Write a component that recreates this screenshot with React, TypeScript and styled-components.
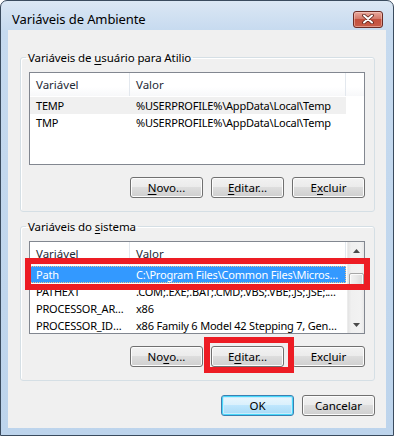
import React from "react";
import styled, { createGlobalStyle, css } from "styled-components";

const GlobalStyle = createGlobalStyle`
  html, body {
    margin: 0;
    padding: 0;
    background: #ffffff;
  }
  body {
    font-family: "Noto Sans", "Segoe UI", sans-serif;
    font-size: 11.5px;
    color: #000;
  }
  * {
    box-sizing: border-box;
  }
`;

const Window = styled.div`
  width: 394px;
  height: 436px;
  border: 1px solid #3a4b5e;
  border-radius: 7px 7px 0 0;
  background: linear-gradient(180deg, #dbe7f4 0px, #c6daef 30px, #bdd4ec 100%);
  display: flex;
  flex-direction: column;
  overflow: hidden;
`;

const TitleBar = styled.div`
  height: 29px;
  flex: none;
  display: flex;
  align-items: center;
  justify-content: space-between;
  padding: 7px 10px 0 11px;
`;

const Title = styled.span`
  font-size: 13px;
  color: #000;
  letter-spacing: -0.1px;
`;

const CloseButton = styled.div`
  width: 30px;
  height: 17px;
  border: 1px solid #6b2b24;
  border-radius: 3px;
  background: linear-gradient(180deg, #e9a99d 0%, #d47a6a 45%, #c4503d 50%, #c85c48 100%);
  box-shadow: inset 0 0 0 1px rgba(255, 220, 210, 0.45);
  display: flex;
  align-items: center;
  justify-content: center;
`;

const Client = styled.div`
  flex: 1;
  margin: 0 7px 7px 7px;
  background: #f0f0f0;
  padding: 20px 11px 12px 12px;
  display: flex;
  flex-direction: column;
`;

const GroupBox = styled.fieldset<{ $spaced?: boolean }>`
  margin: ${(p) => (p.$spaced ? "7px 0 0 0" : "0")};
  padding: 0;
  height: 162px;
  border: 1px solid #d5dfe5;
  border-radius: 3px;
  box-shadow: inset 1px 1px 0 #ffffff;
  min-width: 0;
`;

const Legend = styled.legend`
  margin-left: 5px;
  padding: 0 2px;
  line-height: 15px;
  height: 15px;
  color: #000;
  letter-spacing: -0.1px;
`;

const GroupInner = styled.div`
  padding: 7px 9px 13px 8px;
  display: flex;
  flex-direction: column;
  gap: 12px;
`;

const Mn = styled.span`
  text-decoration: underline;
  text-underline-offset: 2px;
`;

const ListView = styled.div`
  position: relative;
  height: 93px;
  border: 1px solid #828790;
  background: #ffffff;
  display: flex;
`;

const ListBody = styled.div`
  flex: 1;
  display: flex;
  flex-direction: column;
  overflow: hidden;
`;

const HeaderRow = styled.div`
  height: 24px;
  flex: none;
  display: grid;
  grid-template-columns: 100px 216px 1fr;
  background: linear-gradient(180deg, #ffffff 0%, #ffffff 60%, #f7f8fa 100%);
  border-bottom: 1px solid #ffffff;
`;

const HeaderCell = styled.div<{ $last?: boolean }>`
  display: flex;
  align-items: center;
  padding-left: 6px;
  border-right: ${(p) => (p.$last ? "none" : "1px solid #e3e8ee")};
  color: #1e2a36;
  white-space: nowrap;
  overflow: hidden;
`;

const Row = styled.div<{ $state?: "selected" | "inactive" }>`
  width: 316px;
  height: 17px;
  flex: none;
  display: grid;
  grid-template-columns: 100px 216px;
  align-items: center;
  ${(p) =>
    p.$state === "selected" &&
    css`
      background: #3399ff;
      color: #ffffff;
      outline: 1px dotted #f5c28a;
      outline-offset: -1px;
    `}
  ${(p) =>
    p.$state === "inactive" &&
    css`
      background: #f0f0f0;
    `}
`;

const Cell = styled.div`
  padding: 0 6px 0 6px;
  font-size: 11px;
  letter-spacing: -0.2px;
  white-space: nowrap;
  overflow: hidden;
  text-overflow: ellipsis;
  line-height: 17px;
`;

const Scrollbar = styled.div`
  width: 17px;
  flex: none;
  display: flex;
  flex-direction: column;
  background: linear-gradient(90deg, #e3e3e3 0%, #f0f0f0 20%, #f2f2f2 80%, #e8e8e8 100%);
  border-left: 1px solid #ececec;
`;

const ArrowButton = styled.div`
  height: 17px;
  flex: none;
  display: flex;
  align-items: center;
  justify-content: center;
`;

const Track = styled.div`
  flex: 1;
  display: flex;
  flex-direction: column;
  align-items: center;
`;

const Thumb = styled.div`
  margin-top: 14px;
  width: 15px;
  height: 14px;
  border: 1px solid #a6a6a6;
  border-radius: 2px;
  background: linear-gradient(90deg, #f3f3f3 0%, #e8e8e8 50%, #d9d9d9 100%);
  box-shadow: inset 0 0 0 1px #fbfbfb;
`;

const Highlight = styled.div<{ $top: number; $left: number; $w: number; $h: number }>`
  position: absolute;
  top: ${(p) => p.$top}px;
  left: ${(p) => p.$left}px;
  width: ${(p) => p.$w}px;
  height: ${(p) => p.$h}px;
  border: 6px solid #ed1c24;
  pointer-events: none;
  z-index: 2;
`;

const ButtonRow = styled.div<{ $outer?: boolean }>`
  display: flex;
  justify-content: flex-end;
  gap: 8px;
  margin-top: ${(p) => (p.$outer ? "14px" : "0")};
`;

const Button = styled.div<{ $default?: boolean }>`
  position: relative;
  width: 73px;
  height: 21px;
  display: flex;
  align-items: center;
  justify-content: center;
  border: 1px solid #707070;
  border-radius: 3px;
  background: linear-gradient(180deg, #f2f2f2 0%, #ebebeb 49%, #dddddd 50%, #cfcfcf 100%);
  box-shadow: inset 0 0 0 1px #fcfcfc;
  color: #000;
  ${(p) =>
    p.$default &&
    css`
      border-color: #3c7fb1;
      background: linear-gradient(180deg, #eaf6fd 0%, #d9f0fc 49%, #bee6fd 50%, #a7d9f5 100%);
      box-shadow: inset 0 0 0 1px #48d8fb, inset 0 0 0 2px #c9ecfc;
    `}
`;

type Entry = { name: string; value: string; state?: "selected" | "inactive" };

const userVars: Entry[] = [
  { name: "TEMP", value: "%USERPROFILE%\\AppData\\Local\\Temp", state: "inactive" },
  { name: "TMP", value: "%USERPROFILE%\\AppData\\Local\\Temp" },
];

const systemVars: Entry[] = [
  {
    name: "Path",
    value: "C:\\Program Files\\Common Files\\Microsoft Shared\\Windows Live;%SystemRoot%",
    state: "selected",
  },
  { name: "PATHEXT", value: ".COM;.EXE;.BAT;.CMD;.VBS;.VBE;.JS;.JSE;.WSF;.WSH;.MSC" },
  { name: "PROCESSOR_ARCHITECTURE", value: "x86" },
  { name: "PROCESSOR_IDENTIFIER", value: "x86 Family 6 Model 42 Stepping 7, GenuineIntel" },
];

const CloseGlyph = () => (
  <svg width="12" height="10" viewBox="0 0 12 10">
    <path d="M2 1.5 L10 8.5 M10 1.5 L2 8.5" stroke="#5a2018" strokeWidth="3.6" strokeLinecap="round" />
    <path d="M2 1.5 L10 8.5 M10 1.5 L2 8.5" stroke="#ffffff" strokeWidth="2" strokeLinecap="round" />
  </svg>
);

const Arrow = ({ up }: { up?: boolean }) => (
  <svg width="7" height="4" viewBox="0 0 7 4">
    <path d={up ? "M0 4 L3.5 0 L7 4 Z" : "M0 0 L3.5 4 L7 0 Z"} fill="#4a4a4a" />
  </svg>
);

const VarList = ({ rows, scroll, marked }: { rows: Entry[]; scroll?: boolean; marked?: boolean }) => (
  <ListView>
    <ListBody>
      <HeaderRow>
        <HeaderCell>Variável</HeaderCell>
        <HeaderCell>Valor</HeaderCell>
        <HeaderCell $last />
      </HeaderRow>
      {rows.map((r) => (
        <Row key={r.name} $state={r.state}>
          <Cell>{r.name}</Cell>
          <Cell>{r.value}</Cell>
        </Row>
      ))}
    </ListBody>
    {scroll && (
      <Scrollbar>
        <ArrowButton>
          <Arrow up />
        </ArrowButton>
        <Track>
          <Thumb />
        </Track>
        <ArrowButton>
          <Arrow />
        </ArrowButton>
      </Scrollbar>
    )}
    {marked && <Highlight $top={16} $left={-5} $w={345} $h={32} />}
  </ListView>
);

export default function App() {
  return (
    <>
      <GlobalStyle />
      <Window>
        <TitleBar>
          <Title>Variáveis de Ambiente</Title>
          <CloseButton>
            <CloseGlyph />
          </CloseButton>
        </TitleBar>
        <Client>
          <GroupBox>
            <Legend>
              Variáveis de <Mn>u</Mn>suário para Atilio
            </Legend>
            <GroupInner>
              <VarList rows={userVars} />
              <ButtonRow>
                <Button>
                  <Mn>N</Mn>ovo...
                </Button>
                <Button>
                  <Mn>E</Mn>ditar...
                </Button>
                <Button>
                  E<Mn>x</Mn>cluir
                </Button>
              </ButtonRow>
            </GroupInner>
          </GroupBox>
          <GroupBox $spaced>
            <Legend>
              Variáveis do <Mn>s</Mn>istema
            </Legend>
            <GroupInner>
              <VarList rows={systemVars} scroll marked />
              <ButtonRow>
                <Button>
                  No<Mn>v</Mn>o...
                </Button>
                <Button>
                  E<Mn>d</Mn>itar...
                  <Highlight $top={-10} $left={-8} $w={90} $h={36} />
                </Button>
                <Button>
                  Exc<Mn>l</Mn>uir
                </Button>
              </ButtonRow>
            </GroupInner>
          </GroupBox>
          <ButtonRow $outer>
            <Button $default>OK</Button>
            <Button>Cancelar</Button>
          </ButtonRow>
        </Client>
      </Window>
    </>
  );
}
